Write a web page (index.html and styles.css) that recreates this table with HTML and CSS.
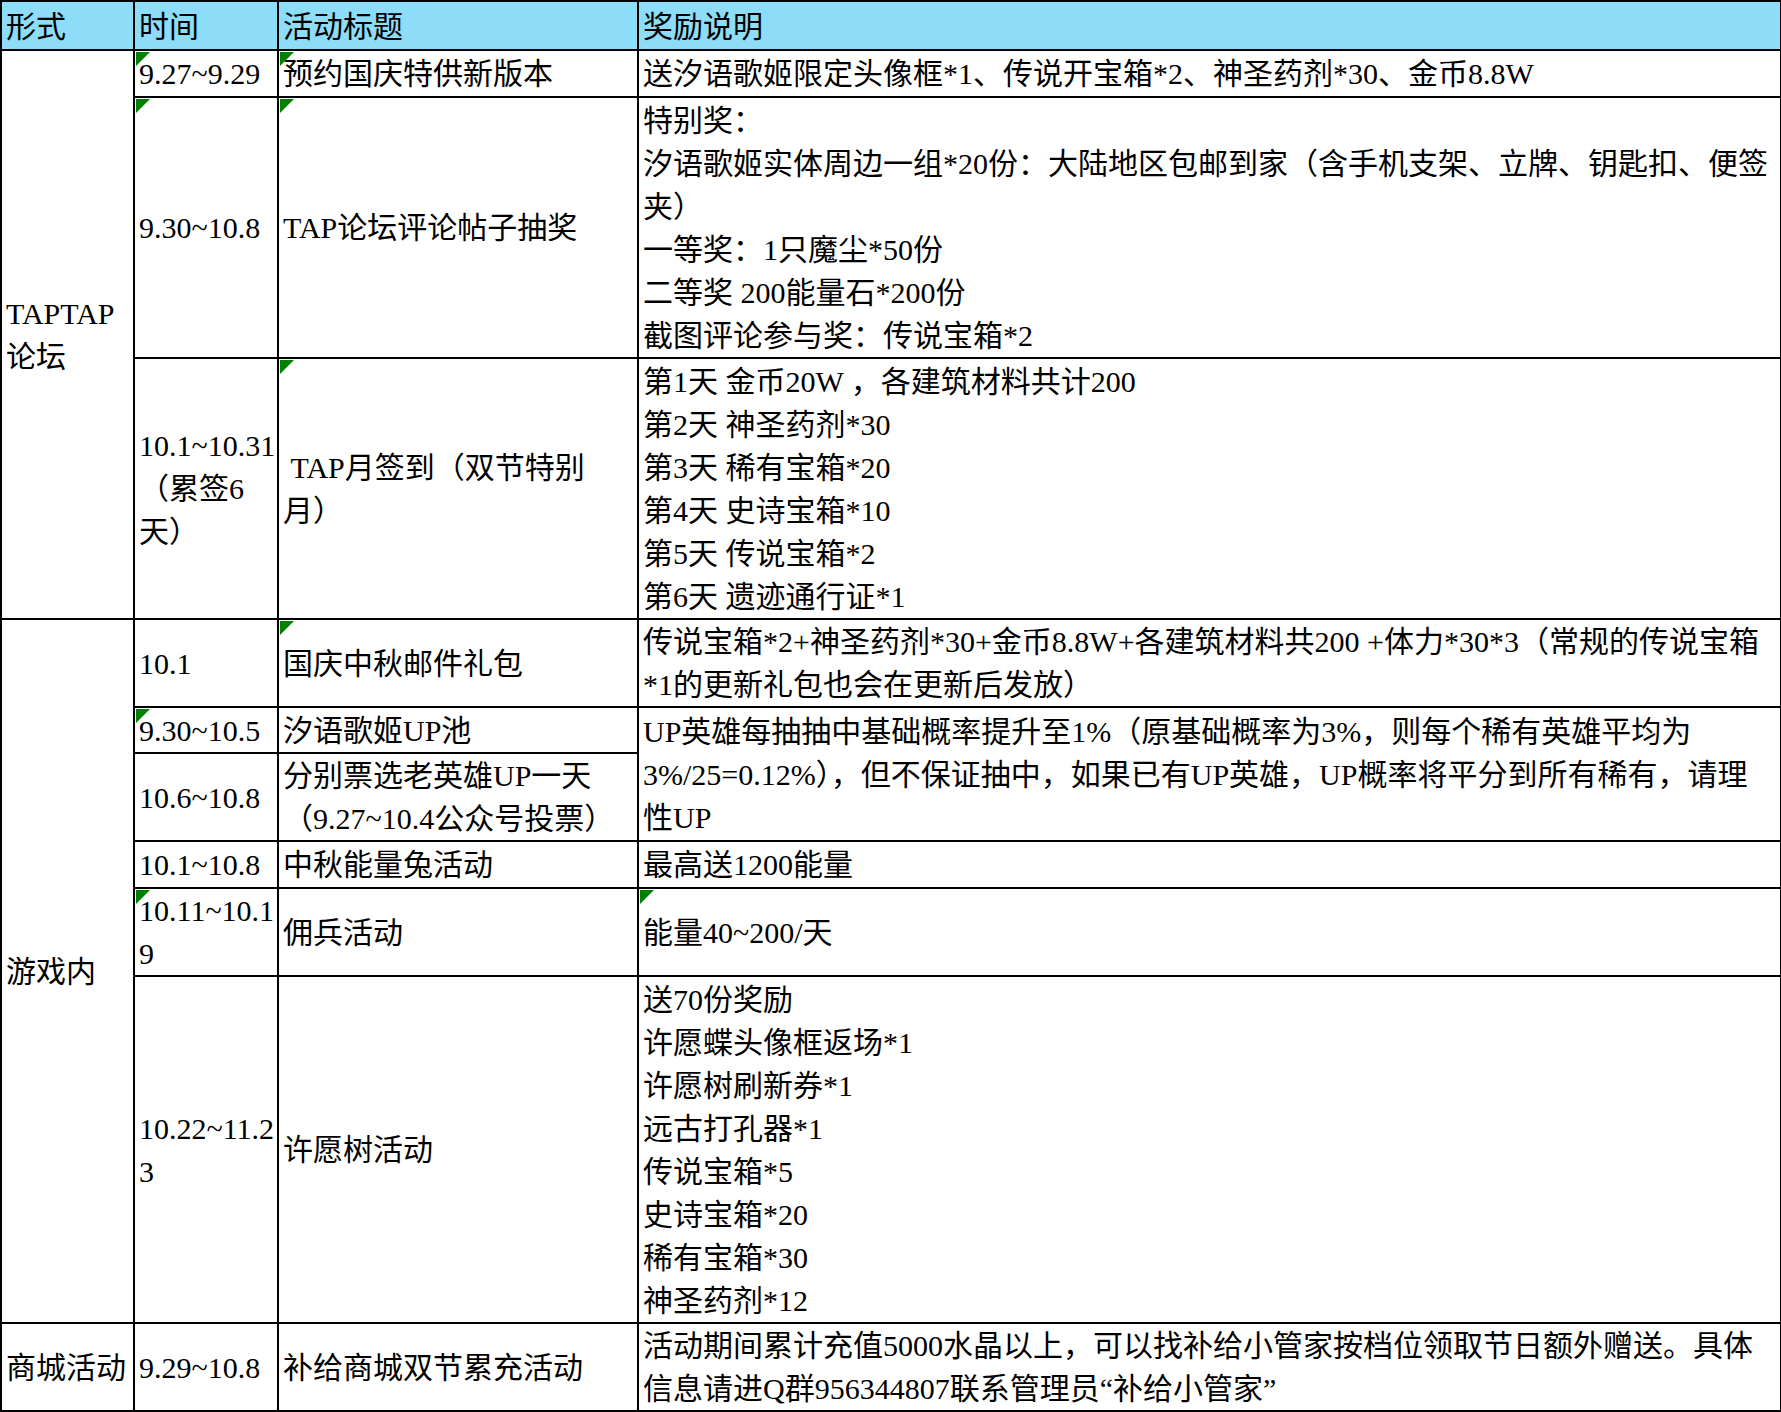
FILE: index.html
```html
<!DOCTYPE html>
<html lang="zh-CN">
<head>
<meta charset="utf-8">
<title>活动安排</title>
<link rel="stylesheet" href="styles.css">
</head>
<body>
<table class="sheet">
  <colgroup>
    <col class="c-form">
    <col class="c-time">
    <col class="c-title">
    <col class="c-reward">
  </colgroup>
  <thead>
    <tr class="head">
      <th>形式</th>
      <th>时间</th>
      <th>活动标题</th>
      <th>奖励说明</th>
    </tr>
  </thead>
  <tbody>
    <tr class="h47">
      <td rowspan="3">TAPTAP<br>论坛</td>
      <td class="flag">9.27~9.29</td>
      <td class="flag">预约国庆特供新版本</td>
      <td>送汐语歌姬限定头像框*1、传说开宝箱*2、神圣药剂*30、金币8.8W</td>
    </tr>
    <tr class="h261">
      <td class="flag">9.30~10.8</td>
      <td class="flag">TAP论坛评论帖子抽奖</td>
      <td>特别奖：<br>汐语歌姬实体周边一组*20份：大陆地区包邮到家（含手机支架、立牌、钥匙扣、便签<br>夹）<br>一等奖：1只魔尘*50份<br>二等奖 200能量石*200份<br>截图评论参与奖：传说宝箱*2</td>
    </tr>
    <tr class="h261">
      <td>10.1~10.31<br>（累签6<br>天）</td>
      <td class="flag">&nbsp;TAP月签到（双节特别<br>月）</td>
      <td>第1天 金币20W ，各建筑材料共计200<br>第2天 神圣药剂*30<br>第3天 稀有宝箱*20<br>第4天 史诗宝箱*10<br>第5天 传说宝箱*2<br>第6天 遗迹通行证*1</td>
    </tr>
    <tr class="h87">
      <td rowspan="6">游戏内</td>
      <td>10.1</td>
      <td class="flag">国庆中秋邮件礼包</td>
      <td>传说宝箱*2+神圣药剂*30+金币8.8W+各建筑材料共200 +体力*30*3（常规的传说宝箱<br>*1的更新礼包也会在更新后发放）</td>
    </tr>
    <tr class="h46">
      <td class="flag">9.30~10.5</td>
      <td>汐语歌姬UP池</td>
      <td rowspan="2">UP英雄每抽抽中基础概率提升至1%（原基础概率为3%，则每个稀有英雄平均为<br>3%/25=0.12%），但不保证抽中，如果已有UP英雄，UP概率将平分到所有稀有，请理<br>性UP</td>
    </tr>
    <tr class="h88">
      <td>10.6~10.8</td>
      <td>分别票选老英雄UP一天<br>（9.27~10.4公众号投票）</td>
    </tr>
    <tr class="h47">
      <td>10.1~10.8</td>
      <td>中秋能量兔活动</td>
      <td>最高送1200能量</td>
    </tr>
    <tr class="h86">
      <td class="flag">10.11~10.1<br>9</td>
      <td>佣兵活动</td>
      <td class="flag">能量40~200/天</td>
    </tr>
    <tr class="h347">
      <td>10.22~11.2<br>3</td>
      <td>许愿树活动</td>
      <td>送70份奖励<br>许愿蝶头像框返场*1<br>许愿树刷新券*1<br>远古打孔器*1<br>传说宝箱*5<br>史诗宝箱*20<br>稀有宝箱*30<br>神圣药剂*12</td>
    </tr>
    <tr class="h86">
      <td>商城活动</td>
      <td>9.29~10.8</td>
      <td>补给商城双节累充活动</td>
      <td>活动期间累计充值5000水晶以上，可以找补给小管家按档位领取节日额外赠送。具体<br>信息请进Q群956344807联系管理员“补给小管家”</td>
    </tr>
  </tbody>
</table>
</body>
</html>
```

FILE: styles.css
```css
html, body {
  margin: 0;
  padding: 0;
  background: #ffffff;
}

.sheet {
  border-collapse: collapse;
  table-layout: fixed;
  width: 1780px;
  font-family: "Liberation Serif", "Noto Sans CJK SC", serif;
  font-size: 30px;
  line-height: 43px;
  color: #000;
  white-space: nowrap;
}

.c-form { width: 133px; }
.c-time { width: 144px; }
.c-title { width: 360px; }
.c-reward { width: 1143px; }

.sheet th,
.sheet td {
  border: 2px solid #000;
  padding: 0 4px;
  text-align: left;
  vertical-align: middle;
  font-weight: normal;
  overflow: hidden;
}

.head { height: 49px; }
.head th {
  background: #8ddcf8;
  padding-top: 2px;
}

.h46 { height: 46px; }
.h47 { height: 47px; }
.h86 { height: 86px; }
.h87 { height: 87px; }
.h88 { height: 88px; }
.h261 { height: 261px; }
.h347 { height: 347px; }

.flag {
  position: relative;
}

.flag::before {
  content: "";
  position: absolute;
  top: 1px;
  left: 1px;
  width: 0;
  height: 0;
  border-top: 14px solid #008000;
  border-right: 14px solid transparent;
}
```
